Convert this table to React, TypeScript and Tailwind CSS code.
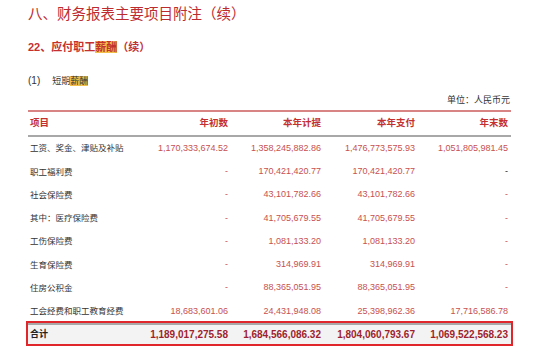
const font = "font-['Liberation_Sans','Noto_Sans_CJK_SC',sans-serif]";

type Row = { label: string; cells: [string, string, string, string]; darkDash?: boolean };

const rows: Row[] = [
  { label: "工资、奖金、津贴及补贴", cells: ["1,170,333,674.52", "1,358,245,882.86", "1,476,773,575.93", "1,051,805,981.45"] },
  { label: "职工福利费", cells: ["-", "170,421,420.77", "170,421,420.77", "-"], darkDash: true },
  { label: "社会保险费", cells: ["-", "43,101,782.66", "43,101,782.66", "-"] },
  { label: "其中：医疗保险费", cells: ["-", "41,705,679.55", "41,705,679.55", "-"] },
  { label: "工伤保险费", cells: ["-", "1,081,133.20", "1,081,133.20", "-"] },
  { label: "生育保险费", cells: ["-", "314,969.91", "314,969.91", "-"] },
  { label: "住房公积金", cells: ["-", "88,365,051.95", "88,365,051.95", "-"] },
  { label: "工会经费和职工教育经费", cells: ["18,683,601.06", "24,431,948.08", "25,398,962.36", "17,716,586.78"] },
];

const cols = "grid grid-cols-[110px_93px_93px_94px_93px]";

export default function App() {
  return (
    <div className={`w-[550px] h-[356px] bg-white overflow-hidden ${font}`}>
      <div className="pl-[28px] pt-[3px] w-[511px]">
        <h1 className="text-[14.5px] leading-[22px] text-[#be2b2f] whitespace-nowrap">八、财务报表主要项目附注（续）</h1>

        <h2 className="mt-[15px] text-[11px] leading-[14px] font-bold text-[#c4302f]">
          22、应付职工<span className="bg-[#f3c04a]">薪酬</span>（续）
        </h2>

        <p className="mt-[21px] text-[9px] leading-[12px] text-[#333]">
          <span className="text-[10px]">(1)</span>
          <span className="ml-[12px]">短期</span>
          <span className="bg-[#f3c04a]">薪酬</span>
        </p>

        <p className="mt-[7px] text-right text-[9px] leading-[12px] text-[#333] pr-[1px]">单位：人民币元</p>

        <div className="mt-[4px] border-t-2 border-[#d98484]">
          <div className={`${cols} h-[25px] items-center border-b-2 border-[#a8a8a8] text-[9.5px] font-bold text-[#c4302f]`}>
            <div className="pl-[2px]">项目</div>
            <div className="text-right pr-[3px]">年初数</div>
            <div className="text-right pr-[3px]">本年计提</div>
            <div className="text-right pr-[3px]">本年支付</div>
            <div className="text-right pr-[3px]">年末数</div>
          </div>

          {rows.map((r) => (
            <div key={r.label} className={`${cols} h-[23.25px] items-center text-[9px] text-[#c8504f]`}>
              <div className="pl-[2px] text-[8.5px] text-[#333] whitespace-nowrap">{r.label}</div>
              {r.cells.map((c, i) => (
                <div
                  key={i}
                  className={`text-right pr-[3px] ${c === "-" && r.darkDash && i === 3 ? "text-[#222]" : ""}`}
                >
                  {c}
                </div>
              ))}
            </div>
          ))}

          <div className="-mx-[2px] -mt-[2px] border-2 border-[#e0252b]">
            <div className={`${cols} h-[21px] items-center border-t-2 border-[#a8a8a8] bg-[#f3f3f3] text-[10px] font-bold text-[#9e1f2e]`}>
              <div className="pl-[2px] text-[9px] text-[#222]">合计</div>
              <div className="text-right pr-[3px]">1,189,017,275.58</div>
              <div className="text-right pr-[3px]">1,684,566,086.32</div>
              <div className="text-right pr-[3px]">1,804,060,793.67</div>
              <div className="text-right pr-[3px]">1,069,522,568.23</div>
            </div>
          </div>
        </div>
      </div>
    </div>
  );
}
